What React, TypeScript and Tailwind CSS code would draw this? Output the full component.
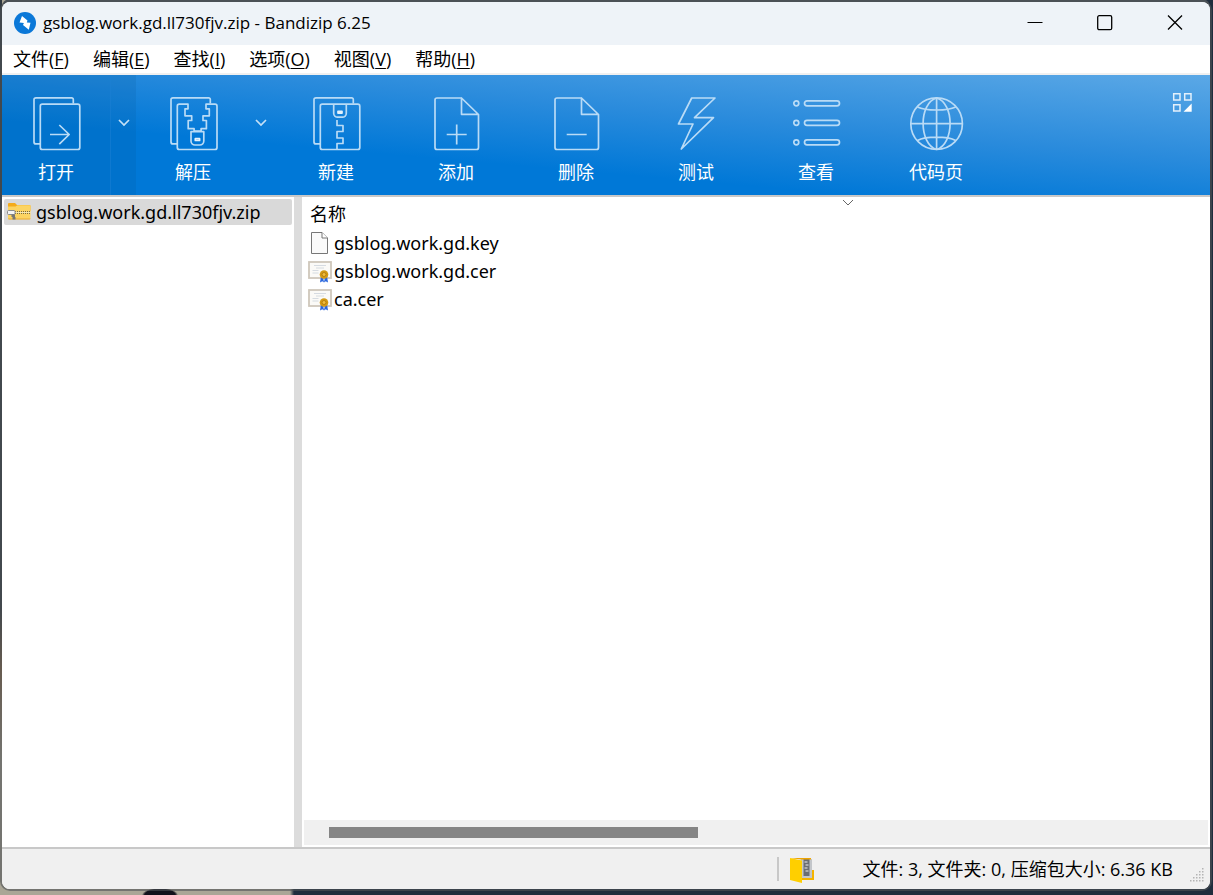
import React from "react";

const Stroke = ({ children }: { children: React.ReactNode }) => (
  <svg viewBox="0 0 56 56" className="h-14 w-14 shrink-0" fill="none" stroke="#b9dbf6" strokeWidth="1.7" strokeLinejoin="round" aria-hidden="true">
    {children}
  </svg>
);

const Back = () => <path d="M45.300 8.500V4.500a1.600 1.600 0 0 0-1.600-1.600H8a2 2 0 0 0-2 2v42a2 2 0 0 0 2 2h4" />;

const icons = {
  open: (
    <Stroke>
      <Back />
      <rect x="12.300" y="9.200" width="39.500" height="45.300" rx="2" />
      <path d="M22 39.500h19M31.300 30l9.900 9.500-9.900 9.700" />
    </Stroke>
  ),
  extract: (
    <Stroke>
      <Back />
      <path d="M14.300 9.200H23v4.600h-3v7h6.700v4.700h-3.500v8.200h5.900v2.300h7v-2.300h5.300v-8.200H38v-4.700h6.300v-7H41V9.200h9a2 2 0 0 1 2 2v41.300a2 2 0 0 1-2 2H14.300a2 2 0 0 1-2-2V11.200a2 2 0 0 1 2-2z" />
      <path d="M26 36.700h12.800v9.300a4 4 0 0 1-4 4H30a4 4 0 0 1-4-4z" />
      <rect x="30.300" y="43.700" width="4.300" height="1.800" stroke="#e5f2fc" />
    </Stroke>
  ),
  create: (
    <Stroke>
      <Back />
      <rect x="12.300" y="9.200" width="39.500" height="45.300" rx="2" />
      <path d="M25.700 9.200v9a4 4 0 0 0 4 4h4.600a4 4 0 0 0 4-4v-9" />
      <rect x="30" y="16.300" width="4" height="1.800" stroke="#e5f2fc" />
      <path d="M29 25v5.500h6v6h-6v6.500h6v5.500h-6v6" />
    </Stroke>
  ),
  add: (
    <Stroke>
      <path d="M33.500 3H9a2 2 0 0 0-2 2v47.500a2 2 0 0 0 2 2h39.500a2 2 0 0 0 2-2V19.500L33.500 3v16.300h17M18.700 39.500h20M28.700 29.500v20" />
    </Stroke>
  ),
  remove: (
    <Stroke>
      <path d="M33.500 3H9a2 2 0 0 0-2 2v47.500a2 2 0 0 0 2 2h39.500a2 2 0 0 0 2-2V19.500L33.500 3v16.300h17M18.700 39.500h20" />
    </Stroke>
  ),
  test: (
    <Stroke>
      <path d="M23.700 3H47L26.500 22.700h19L13.300 54 25 29H10.500z" />
    </Stroke>
  ),
  view: (
    <Stroke>
      {[8.3, 27.8, 47.3].map((y) => (
        <g key={y}>
          <circle cx="8.300" cy={y} r="2.500" />
          <rect x="16.500" y={y - 2.5} width="35" height="5" rx="2.500" />
        </g>
      ))}
    </Stroke>
  ),
  codepage: (
    <Stroke>
      <circle cx="28.600" cy="28.700" r="25.800" />
      <path d="M2.800 28.700h51.600M28.600 3v51.500M9.500 12c8 4 30 4 38.200 0M9.500 45.500c8-4.500 30-4.500 38.200 0" />
      <path d="M28.600 3c-18 5-18 46 0 51.500M28.600 3c18 5 18 46 0 51.500" />
    </Stroke>
  ),
};

const Chevron = () => (
  <svg viewBox="0 0 12 8" className="h-2 w-3" fill="none" stroke="#c4e0f6" strokeWidth="1.7" aria-hidden="true">
    <path d="M1 1l5 5 5-5" />
  </svg>
);

const menus = [
  ["文件", "F"],
  ["编辑", "E"],
  ["查找", "I"],
  ["选项", "O"],
  ["视图", "V"],
  ["帮助", "H"],
];

const wideTools = [
  { label: "新建", icon: icons.create },
  { label: "添加", icon: icons.add },
  { label: "删除", icon: icons.remove },
  { label: "测试", icon: icons.test },
  { label: "查看", icon: icons.view },
  { label: "代码页", icon: icons.codepage },
];

const splitTools = [
  { label: "打开", icon: icons.open, active: true },
  { label: "解压", icon: icons.extract, active: false },
];

const PageIcon = () => (
  <svg viewBox="0 0 24 24" className="h-6 w-6" aria-hidden="true">
    <path d="M3.500 1.500h10.500l5.500 5.500v15.500h-16z" fill="#fafafa" stroke="#777" />
    <path d="M14 1.500V7h5.500" fill="#fff" stroke="#777" />
  </svg>
);

const CertIcon = () => (
  <svg viewBox="0 0 24 24" className="h-6 w-6" aria-hidden="true">
    <rect x="1" y="3" width="22" height="16" fill="#fbfaf7" stroke="#cfc7bb" strokeWidth="1.800" />
    <path d="M6 6.500h12M8 9h8M4.500 11.500h6M4.500 14h6" stroke="#cdd3da" strokeWidth="0.800" />
    <path d="M13 17l-1 6.500 2.300-1.200 1.700 1.200 1-6zM19 17l1 6.500-2.300-1.200-1.700 1.200-1-6z" fill="#2b67dd" />
    <circle cx="16" cy="15.500" r="4.300" fill="#d39a13" />
    <circle cx="16" cy="15.500" r="2" fill="#f0bd3b" stroke="#a66f06" strokeWidth="0.700" />
  </svg>
);

const ZipIcon = () => (
  <svg viewBox="0 0 24 24" className="h-6 w-6 shrink-0" aria-hidden="true">
    <path d="M1 4a1 1 0 0 1 1-1h6l2 2h12.500a1 1 0 0 1 1 1v5H1z" fill="#f4ab1b" />
    <path d="M1 6.500h7.500l2-1.200h13v13a1 1 0 0 1-1 1H2a1 1 0 0 1-1-1z" fill="#fcd462" />
    <path d="M1 18.500h22.500a1 1 0 0 1-1 1H2a1 1 0 0 1-1-1z" fill="#e9a935" />
    <path d="M8 12.500h15.500" stroke="#776b45" strokeWidth="3" strokeDasharray="1 1" />
    <path d="M8 12.500h15.500" stroke="#f5e7b4" />
    <rect x="0.500" y="10.500" width="7.500" height="4" rx="1" fill="#f4f4f4" stroke="#8b8b8b" />
    <path d="M4.500 14.500h3.500v2.500H4.500zM5.500 17h3v2.500h-3z" fill="#777" />
  </svg>
);

const files = [
  { name: "gsblog.work.gd.key", icon: <PageIcon /> },
  { name: "gsblog.work.gd.cer", icon: <CertIcon /> },
  { name: "ca.cer", icon: <CertIcon /> },
];

export default function App() {
  return (
    <div className="flex min-h-screen flex-col bg-[#1f2d3d] bg-[radial-gradient(ellipse_18px_7px_at_160px_100%,#11121c_85%,transparent_100%),linear-gradient(90deg,transparent_2px,#aaa696_2px_290px,#1f2d3d_294px),linear-gradient(180deg,#2f3840_0_68%,#8a6a48_75%,#aaa696_85%)] pt-[2px] pr-[3px] pb-1.5 pl-[2px] font-['Noto_Sans','Noto_Sans_CJK_SC',sans-serif] text-[18px] leading-6 text-black">
      <div className="flex flex-1 flex-col rounded-lg shadow-[0_0_0_2px_rgba(80,84,86,0.6),0_-3px_0_0_#454e56]">
        <div className="flex flex-1 flex-col overflow-hidden rounded-lg bg-white">
          <header className="flex h-[43px] items-center bg-[#eef3f8] pb-[2px]">
            <svg viewBox="0 0 22 22" className="ml-3 h-[22px] w-[22px]" aria-hidden="true">
              <circle cx="11" cy="11" r="11" fill="#0b78d8" />
              <path d="M8 4l5.500 4.500-.7 2 3.700.3-1.700 7-5.800-4.800.9-2-4.400-.5z" fill="#fff" />
            </svg>
            <h1 className="ml-[7px] flex-1 whitespace-nowrap font-['Open_Sans','Noto_Sans_CJK_SC',sans-serif] text-[17px] font-normal">gsblog.work.gd.ll730fjv.zip - Bandizip 6.25</h1>
            <div className="flex h-full">
              <button aria-label="最小化" className="flex w-[70px] items-center justify-center">
                <svg viewBox="0 0 16 16" className="h-4 w-4" stroke="#000"><path d="M0.500 7.500h15" /></svg>
              </button>
              <button aria-label="最大化" className="flex w-[70px] items-center justify-center">
                <svg viewBox="0 0 16 16" className="h-4 w-4" fill="none" stroke="#000" strokeWidth="1.300"><rect x="0.700" y="0.700" width="14" height="14" rx="1.500" /></svg>
              </button>
              <button aria-label="关闭" className="flex w-[70px] items-center justify-center">
                <svg viewBox="0 0 16 16" className="h-4 w-4" stroke="#000" strokeWidth="1.300"><path d="M1 0.500l14 14M15 0.500L1 14.500" /></svg>
              </button>
            </div>
          </header>

          <nav className="flex h-[30px] items-center gap-[2px] border-b-2 border-[#f0f0f0] bg-white">
            {menus.map(([name, key]) => (
              <button key={key} className="px-[11px] whitespace-nowrap font-['Open_Sans','Noto_Sans_CJK_SC',sans-serif]">
                {name}(<span className="underline decoration-1 underline-offset-2">{key}</span>)
              </button>
            ))}
          </nav>

          <div className="flex h-[122px] items-stretch border-b-2 border-[#c8c8c8] bg-[linear-gradient(5deg,#0078d7_33%,#2a8bdc_62%,#5ba8e6_100%)] text-white">
            <div className="flex gap-[3px] pr-[3px]">
              {splitTools.map((t) => (
                <div key={t.label} className={t.active ? "flex bg-[#00508c]/15" : "flex"}>
                  <button className="flex w-[108px] flex-col items-center gap-[9px] pt-5">
                    {t.icon}
                    {t.label}
                  </button>
                  <button aria-label={t.label + "选项"} className={t.active ? "flex w-[26px] justify-end border-l border-[#1b7fd3]/50 pt-11 pr-1.5" : "flex w-[26px] justify-end pt-11 pr-1.5"}>
                    <Chevron />
                  </button>
                </div>
              ))}
            </div>
            {wideTools.map((t) => (
              <button key={t.label} className="flex w-[120px] flex-col items-center gap-[9px] pt-5">
                {t.icon}
                {t.label}
              </button>
            ))}
            <button aria-label="布局" className="mt-[17px] mr-[18px] ml-auto h-5 w-5">
              <svg viewBox="0 0 20 20" className="h-5 w-5" fill="none" stroke="#e3f0fb" strokeWidth="1.500" aria-hidden="true">
                <path d="M1.700 1.700h6.300v6.300H1.700zM12.700 1.700h6.300v6.300h-6.300zM1.700 12.700h6.300v6.300H1.700z" />
                <path d="M19.700 11.500v8.200h-8.200z" fill="#fff" stroke="none" />
              </svg>
            </button>
          </div>

          <main className="flex flex-1">
            <aside className="w-[292px] px-[2px] pt-[2px]">
              <button className="flex h-[26px] w-full items-center gap-[5px] rounded-xs bg-[#d9d9d9] pl-[3px] text-left">
                <ZipIcon />
                <span className="whitespace-nowrap">gsblog.work.gd.ll730fjv.zip</span>
              </button>
            </aside>
            <div className="w-2 bg-[#dcdcdc]" />
            <section className="flex flex-1 flex-col">
              <table className="w-full border-collapse text-left">
                <thead>
                  <tr>
                    <th className="relative h-8 pt-[2px] pl-2 font-normal">
                      名称
                      <svg viewBox="0 0 12 7" className="absolute top-[2px] left-[59.5%] h-[7px] w-3" fill="none" stroke="#666" aria-hidden="true">
                        <path d="M1 1l5 5 5-5" />
                      </svg>
                    </th>
                  </tr>
                </thead>
                <tbody>
                  {files.map((f) => (
                    <tr key={f.name}>
                      <td className="h-7 pl-1.5">
                        <div className="flex items-center gap-[2px]">
                          {f.icon}
                          {f.name}
                        </div>
                      </td>
                    </tr>
                  ))}
                </tbody>
              </table>
              <div className="mt-auto mr-[2px] mb-[2px] ml-[2px] flex h-[25px] items-center bg-[#f0f0f0] pl-[25px]">
                <div className="h-[11px] w-[42%] bg-[#858585]" />
              </div>
            </section>
          </main>

          <footer className="flex h-[42px] items-center justify-end border-t-2 border-[#c8c8c8] bg-[#f0f0f0]">
            <div className="h-6 w-[2px] bg-[#c8c8c8]" />
            <svg viewBox="0 0 26 28" className="ml-2.5 h-7 w-[26px]" aria-hidden="true">
              <path d="M10 15h15v10H10z" fill="#f5b400" />
              <rect x="12" y="4" width="11" height="19" fill="#c3c6ca" />
              <rect x="14.500" y="4" width="6" height="17" fill="#6a6e73" />
              <path d="M15.500 7h3M16.500 10h3M15.500 13h3M16.500 16h3" stroke="#eee" />
              <path d="M1 3h21v1.500H12z" fill="#eea400" />
              <path d="M1 3L13 5.500V28L1 25z" fill="#ffcf00" />
            </svg>
            <span className="ml-12 whitespace-nowrap font-['Open_Sans','Noto_Sans_CJK_SC',sans-serif]">文件: 3, 文件夹: 0, 压缩包大小: 6.36 KB</span>
            <svg viewBox="0 0 16 16" className="mt-3 mr-[5px] ml-4 h-4 w-4 self-center" fill="#b4b4b4" aria-hidden="true">
              {[0, 1, 2, 3, 4].flatMap((r) =>
                Array.from({ length: r + 1 }, (_, c) => <rect key={r + "-" + c} x={13 - c * 3} y={1 + r * 3} width="1.500" height="1.500" />),
              )}
            </svg>
          </footer>
        </div>
      </div>
    </div>
  );
}
